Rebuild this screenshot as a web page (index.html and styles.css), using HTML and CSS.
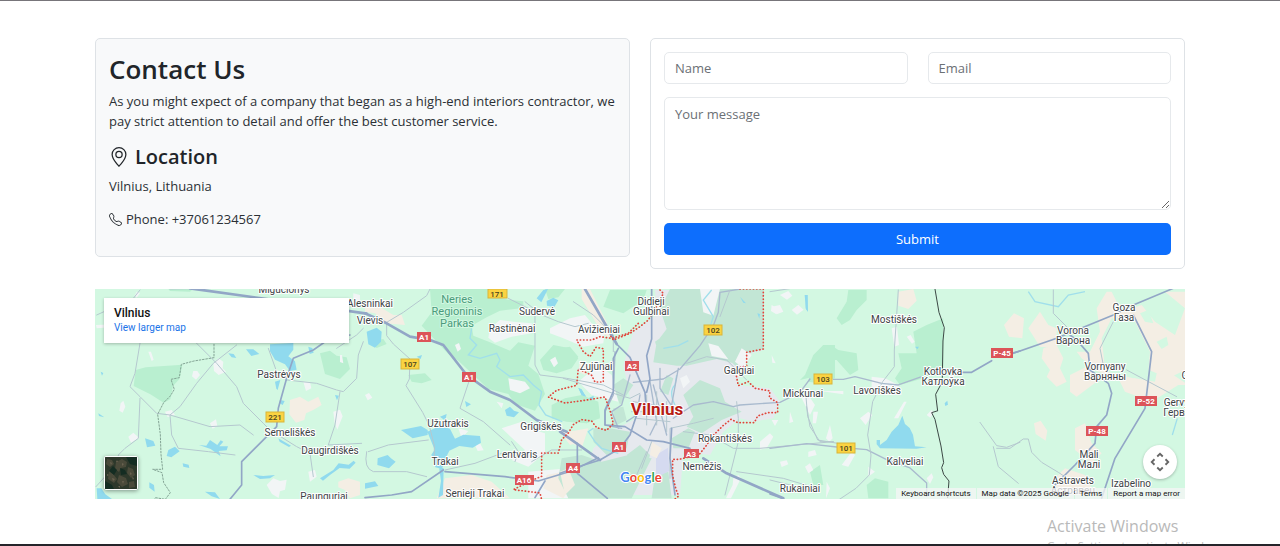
FILE: index.html
```html
<!DOCTYPE html>
<html lang="en">
<head>
<meta charset="utf-8">
<meta name="viewport" content="width=device-width, initial-scale=1">
<title>Contact Us</title>
<link rel="stylesheet" href="styles.css">
</head>
<body>
<main class="page">
  <div class="columns">
    <section class="card card-info">
      <h1 class="title">Contact Us</h1>
      <p class="text">As you might expect of a company that began as a high-end interiors contractor, we pay strict attention to detail and offer the best customer service.</p>
      <h2 class="subtitle">
        <svg class="icon-pin" viewBox="0 0 16 16" aria-hidden="true"><path d="M12.166 8.94c-.524 1.062-1.234 2.12-1.96 3.07A32 32 0 0 1 8 14.58a32 32 0 0 1-2.206-2.57c-.726-.95-1.436-2.008-1.96-3.07C3.304 7.867 3 6.862 3 6a5 5 0 0 1 10 0c0 .862-.305 1.867-.834 2.94M8 16s6-5.686 6-10A6 6 0 0 0 2 6c0 4.314 6 10 6 10"/><path d="M8 8a2 2 0 1 1 0-4 2 2 0 0 1 0 4m0 1a3 3 0 1 0 0-6 3 3 0 0 0 0 6"/></svg>
        Location
      </h2>
      <p class="text">Vilnius, Lithuania</p>
      <p class="text phone">
        <svg class="icon-phone" viewBox="0 0 16 16" aria-hidden="true"><path d="M3.654 1.328a.678.678 0 0 0-1.015-.063L1.605 2.3c-.483.484-.661 1.169-.45 1.77a17.6 17.6 0 0 0 4.168 6.608 17.6 17.6 0 0 0 6.608 4.168c.601.211 1.286.033 1.77-.45l1.034-1.034a.678.678 0 0 0-.063-1.015l-2.307-1.794a.68.68 0 0 0-.58-.122l-2.19.547a1.75 1.75 0 0 1-1.657-.459L5.482 8.062a1.75 1.75 0 0 1-.46-1.657l.548-2.19a.68.68 0 0 0-.122-.58zM1.884.511a1.745 1.745 0 0 1 2.612.163L6.29 2.98c.329.423.445.974.315 1.494l-.547 2.19a.68.68 0 0 0 .178.643l2.457 2.457a.68.68 0 0 0 .644.178l2.189-.547a1.75 1.75 0 0 1 1.494.315l2.306 1.794c.829.645.905 1.87.163 2.611l-1.034 1.034c-.74.74-1.846 1.065-2.877.702a18.6 18.6 0 0 1-7.01-4.42 18.6 18.6 0 0 1-4.42-7.009c-.362-1.03-.037-2.137.703-2.877z"/></svg>
        Phone: +37061234567
      </p>
    </section>

    <form class="card card-form">
      <div class="row">
        <input class="field" type="text" placeholder="Name" aria-label="Name">
        <input class="field" type="email" placeholder="Email" aria-label="Email">
      </div>
      <textarea class="field message" placeholder="Your message" aria-label="Your message"></textarea>
      <button class="submit" type="submit">Submit</button>
    </form>
  </div>

  <section class="map" aria-label="Map of Vilnius">
    <svg class="map-art" viewBox="0 0 1090 210" preserveAspectRatio="xMidYMid slice" role="img" aria-label="Vilnius and surroundings">
      <!-- land cover, drawn in five tiles from west to east -->
      <g transform="translate(-5 -4) scale(.3333)">
        <path class="wood" d="M137 255l30-8 110-8-8 42-20 22-8 40-20 10-40-25-50-25z M690 205l30-8 20 15 30 5 10 35-30 30-45-15z M235 12h75l-10 8-60-2z"/>
        <path class="town" d="M370 235l15-15 15 10-2 20 10 10-22 10-14-12z M310 258l12 0 8 12-12 14-12-10z M175 200l8 0 8 24-6 4z M92 355l8-8 6 18-8 18-10-6z M115 455l15-12 18 16-25 14z M225 380l20-5 10 15-22 6z M360 415l18-12 4 20-14 8z M640 290l20 0 4 20-16 8z M730 380l20-6 8 20-16 40-8-20z M655 560l20-5 5 20-20 15z M530 600l20-20 20 8 20-4-5 30-15 5-4 20-20-12z M140 20l10 4-10 14-6-6z M18 120l100-4v6l-98 8z M790 25l20 5v30l-20-5z M750 210l6 0 4 25-10-4z"/>
        <path class="sand" d="M600 345l30-10 25 15 30-15 10 25-25 15-22 10-5 20-25 8-20-25z M745 590l30-10 35 10 0 40-30 10-15-25-20-8z"/>
        <path class="water" d="M540 178l70-4 0 20-15 20 20 15 5 25-20 4-15-20-30-14-15-25z M555 290l16-5-8 30-4-4z M165 460l25 8 6 14-25 5z M360 465l22 15 10-14 8 4-12 14 26 0-4 12-24 2 6 16-30-22-35-12 22 2z M235 495l20-10 14 14-25 18-14-4z M278 535l18 4 2 10-18-4z M490 570l30 3 35-3-15 10-30 2z M345 620l30 2 15 20-25-8z M20 610l14 0 12 18 20 14h-44z M178 592l14 8 2 20-16-12z M25 385l18 12-16-4z M32 260l8 4-4 8z M570 345l14 3-6 12-10-6z M565 460l38 22-6 4-28-16z M690 580l40-25 16-20 30 4 15-12 6 6-18 18-30-2-30 22-20 16z M415 205l16 2 8 12-14-2z M655 185l12 4 4 14-12 4z M468 193l22 0 18 14-24 6z M735 330l12 2-6 14z"/>
      </g>
      <g transform="translate(270 -4) scale(.3333)">
        <path class="wood" d="M195 12h175l10 20 50 12 45 5 0 20-70 8-40 20-45 25 5 30 50 20 60 25 25-25 50 10-20 60 30 25 20 60-30 50-60-20-20-30-60-15-90-85-30-20-80-85 30-40z M525 225l40-45 50 10 25 30-20 30-45 15-40-10z M560 360l40-20 50-10 50 20 5 45-40 20-60-5-45-10z M130 270l50-5 20 20-30 10-30-5z M15 170l40-8 10 15-30 12z M540 12h60l-20 25-30 5z"/>
        <path class="town" d="M375 130l30-25 40 5 55 5 0 30-60 10-50 18-20-15z M555 130l60-30 45-10 20 25 40 20-5 40-60 10-60-25-40-15z M430 280l50 10 15 20-30 15-30-10z M410 430l60-20 20 20 50 15 0 60-50 40-50-20 40-30z M395 350l20 5-5 15z M330 480l16-4 10 20-18 2z M555 225l16-10 8 20-12 12z M270 180l12-6 6 18-10 8z M640 290l60-50 40 30 20 80-80-20z M490 560l120-10 0 90h-120z M280 430l30 8-20 22z M0 330l12-6 10 14-14 8z"/>
        <path class="sand" d="M0 50l35 10 50 30 25 0 10 30-60-5-30-30-30-5z M240 580l80-10 60 20 55 50h-220z M610 440l60-10-20 60-40-20z M545 570l50-10 20 50-20 30-60-30z"/>
        <path class="water" d="M5 140l30-12 15 12-2 30-18 18-20-10z M108 435l60-12 20 12 0 15-45 10z M187 440l30-14 10-20 8 20 20 5 15 30 25-12 50 4 3 20-25 15-40-5-30 14-12 25-10 30-20-5-12-38 10-15z M420 375l15-10 12 12 15 5-15 15-22-5z M38 520l30-10 10 10 14 10-20 20-35-10z M225 395l20-8-4 20z M0 595l30-6 10 14-40 8z M545 48l20-10 15 8-12 20-22-4z M515 40l20-25 14-3-20 40z M155 215l16-5-4 12z M300 348l18 10-14 8z M222 545l14 5-2 80-14 8 8-50z M640 308l10 5 12 22-12-4z M670 340l16-8 0 12z"/>
        <path class="river" d="M320 130l-5 30 20 20-25 30 35 10 50-15 10 20-10 20 40 30 40-5 30 30 25 20-8 40 20 30 50 20"/>
      </g>
      <g transform="translate(465 -4) scale(.3333)">
        <path class="city" d="M285 15h325l0 180-50 15-30 90 100 10 30 40-20 50-60 10-40-10-50 40-40 70-80-10-10 130h-200l-40-20-40-50 20-70 70-60 60-30-20-60-20-100 30-100 70-50z"/>
        <path class="city-wood" d="M330 12h280l0 180-50 15-30 30-60-15-90 20-30 0-70-10 10-60 30-40-20-60z M370 330l50-45 60 25 15 40 50 30-60 25-60 40-45-20 20-30z M500 180l60 15-30 50-30-25z M100 430l50 0 60 10-10 50-60 20-40-40z M335 460l50-30 20 10-20 50-45 0z M5 520l60-10 60 20 80-20 70 10-60 120h-190l-30-60z M285 570l40-10 10 80h-60z M300 320l20-50 20 10-15 50z M160 300l30-20 30 20-40 60z M200 510l40-30 30 30-10 40z M285 170l15-10 15 20-20 20z M160 370l30-5 10 40-40 20z"/>
        <path class="town" d="M420 12l60 0-20 80-30-10z M545 190l30 20-25 40-25-20z M360 280l20-10 10 20-20 20z M600 470l30-25 10 10-20 35-20 4z M520 580l15-10 8 10-30 60-15 0 20-40z M660 30l25-12 12 14-16 12z M635 60l20 12-6 16-16-10z M690 380l10 30-12 4z M635 210l12 25-10-2z M570 450l12 8-20 16z M635 405l20 0-10 18z M445 175l30 8 30 40-50-10z"/>
        <path class="airport" d="M288 510l36-22 4 70-40 20z"/>
        <path class="sand" d="M65 12l25 0 50 100 10 50-25-20-60-100z M60 225l25 15-10 30-20-10z M0 440l60 0 0 30-30 10z M275 470l30 20-15 30-20-10z M0 560l25-10 20 50-30 30z"/>
        <path class="wood" d="M745 290l10-60 35-50 35 0v100l-50 15z M0 190l30-5 25 30-30 30-25 5z M0 350l50-10 60 10 10 50-40 15-80-20z M150 15h110l-10 30-60 40-60-20z M750 560l30-20 10 60-30 0z"/>
        <path class="river" d="M455 15l-25 30 30 50-8 25M310 190l45-8 30-15M345 360q-20-40 0-60l5-30M100 430l-15 10 20 30 20 20 50 15"/>
        <path class="water" d="M734 30l8 0 2 50-6-8z M592 85l8 2-2 14z M55 310l10 5 14 20-14-6z M540 35l18 20-8-2z"/>
      </g>
      <g transform="translate(675 -4) scale(.3333)">
        <path class="wood" d="M235 15h55l0 30-30 30-20 30-25 15-15-20 30-50z M105 270l25-60 30-30 30 5 15 10 55 10 5 50-25 15-40-45-35 0-35 50-40 10z M430 140l40-20 50-20 0 160-60 20-70 20-15-20 20-30-10-45 55 0z M290 600l25-20 40 10 0 50h-60z M135 575l15 0-10 50-10-20z"/>
        <path class="town" d="M305 275l40 5 40 20 10 30-60 0-30-20z M372 400l30-50 8 0-25 50z M95 340l20-10 20 30-15 30z M180 420l8 40-10 10-10-10z M150 318h70v10z M410 155l12-5 12 20-8 6z M270 400l25-20 12 10-20 30z M215 540l30-40 10 10-20 35z M105 545l15-10 10 20-15 10z M130 380l14 0-6 35-10 0z M5 65l25-5 10 20-20 8z M65 75l20-15 16 14-20 15z M365 130l16-5 6 55-14 5z M115 500l20-5 5 15-25 6z M170 590l10 20-12 30z M30 530l20-4 5 12-20 8z M470 580l15-15 5 12-10 20z M470 390l15-15 6 8-10 15z M295 545l20 15-20 15z"/>
        <path class="sand" d="M385 20l45-8 10 35-25 25-30-10z"/>
        <path class="water" d="M320 465l10 0 0 15 20-15 15-25 20-20 12-28 8 25 14 12 10 20 6 35 35 3-30 4-110-1-10-12z M435 185h12l-5 8z M524 355l8-8 2 12-8 4z M107 30l6 0 0 50-6-10z"/>
      </g>
      <g transform="translate(875 -4) scale(.3333)">
        <path class="sand" d="M102 120l30-35 30 15-5 60-40-5z M175 130l35-50 25 40 25 10 0 60-50-5z M220 190l40-10 20 40-10 30 20 40-30 15-30-30 10-20-25-35z M320 200l40 0 30-60-10-70 30-50h15l30 60 60-20 40 50 60 40 30-80-60-50h60l50 20 0 260-60-40-40 20-70-30-10-60-50-90-40 0-30 60 10 90 90 30 60 10 10-50 90 60-30 0-80 50-80-30-20-40-60-20-50-40z M300 270l60-30 20 50-60 45-20-15z M192 415l20-8 20 30-5 30-30-20z M315 430l30-15 20 60 30 30-30 30-50-40z M245 590l40-40 60 20 30 60h-100z"/>
        <path class="green" d="M430 110l60-10 50 100-5 60-45 20-80-20z M510 85l25-10 15 40-25-5z M560 170l30-15 5 25-20 12z"/>
        <path class="river" d="M175 20l20 30 70 15 30-35 50-10M622 400l-15 50M600 350l30 10"/>
      </g>

      <!-- minor roads -->
      <g transform="translate(-5 -4) scale(.3333)" class="road">
        <path d="M150 175l-15 90-15 40 30 30 50 50 40 5 120 35 90-5 40 30"/><path d="M150 340l-5 120-40 30-20 20v20L18 605M320 175l60 60 60 70 20 50 60 60 20 20 80 50 40 20 10 70M440 180l-70 55-50 60-50 70-30 25 5 60 20 40 90 10 80 10M535 190l25 70 30 25 90 10 60 20 20 5 40-40 5-70 15-40M750 320l-15 100-20 60 100-5M240 12l220-4M20 90l110-50 20-25M740 190l60-40 20-20"/>
      </g>
      <g transform="translate(270 -4) scale(.3333)" class="road">
        <path d="M195 12l-10 20-70 50-50 30v40l20 25 50 45-2 60-10 20 50 80 20 40 15 60v60M315 280l-30 90 70 40 80 70M430 40l80 40 0 160 15 30 80 10 110 20 60 30M480 50l50 40 50 20 50 15 40-10M5 500q-10 50 20 60h100l60 15M10 500l60-20 120-15M240 555l90-20 80-30M440 470l20 30-10 30M500 530l60-35h90"/>
      </g>
      <g transform="translate(465 -4) scale(.3333)" class="road">
        <path class="thick" d="M540 12l-60 10-5 60-15 40-40 60-60 70-50 30-90 10M165 200l-5 130-25 50 0 40 50 10M240 330l-10 60-30 20M280 300l40 150M300 250l0 60 40 60M355 250l-20 110 30 30M210 270l-25 90-30 20 20 50M270 290l20 120-20 40M340 400l60-40 60-10 60 15 20-5 120-8 60-30 30-40"/><path d="M380 235l60-20 60 10 40 40 20 20M460 400l-60 15-70 15 0 150M530 350l5 50 0 70-40 160M370 440l80 10 70 40 80 0 220-20M740 365l10 60 30 45 40 0M10 280l200 60 30-15M160 200l0-50-60-60-60-40M245 550l30-80M230 570l30-70M530 560l140 20 100 30M680 620l80-10M510 15l-30 80"/><path d="M215 380h130M220 350l120 20M230 400l100 10M260 330v90M290 320v100M320 350v90"/>
      </g>
      <g transform="translate(675 -4) scale(.3333)" class="road">
        <path class="thick" d="M190 283h30l35-8 80 20 50 5 70-25M0 490l110-14 90 10 90 8 60 30 70 25 50 45 0 40"/><path d="M385 15l-12 180 0 50-35 45-30 60-15 100 10 60-5 60-40 40-60 40M108 335l5 60 30 70 60 10M0 20l130-20M0 585l80 20"/><path d="M630 412l50 70 30 5 40-15M670 485l15 60 60 50"/>
      </g>
      <g transform="translate(875 -4) scale(.3333)" class="road">
        <path d="M250 15l0 70 50 50M430 110l-40 80 10 50M470 255l150 80M80 490l40 0 40-28 15 0 10 40 30 30 50 30 30 20"/>
      </g>

      <!-- main roads -->
      <g transform="translate(-5 -4) scale(.3333)" class="highway">
        <path d="M300 10l230 32 300 44"/><path class="slim" d="M780 150l-60 10-50 35-60 25-20 60-25 90-5 55-60 60-45 45 0 70-45 55"/>
      </g>
      <g transform="translate(270 -4) scale(.3333)" class="highway">
        <path d="M0 85l65 30 70 40 60 10 40 15 70 90 70 50 60 25 80 60 90 35"/><path class="slim" d="M240 560l180 15 100 13 100-30 80-40M0 638l80-8 60-10 95-65M510 638l30-50"/>
      </g>
      <g transform="translate(465 -4) scale(.3333)" class="highway">
        <path d="M75 12l95 165"/><path class="slim" d="M170 177l40 40 45 105 5 70M275 12l0 70 0 80-15 50 10 70-10 40M175 190l-15 30 0 100-25 55 0 45 60 5 65 40 50 5 80 20M120 525l60-35 30-40 20-60M52 475l0 90 90 75M0 565l50-18 70-22M335 430l-5 90 15 110"/><path d="M0 440l120 85M430 520l70 45 170 75"/>
      </g>
      <g transform="translate(675 -4) scale(.3333)" class="highway">
        <path class="slim" d="M575 262h30l60-35M725 205l25-7M0 627l40 14"/>
      </g>
      <g transform="translate(875 -4) scale(.3333)" class="highway">
        <path class="slim" d="M130 205l130-45 170-70 60-30 120-50M300 150l20 15 35 40 5 50 55 40 10 30-15 65-30 35-5 50-60 65-60 60M490 90l55 110-20 170-90 150-40 120"/>
      </g>

      <!-- municipal, district and state borders -->
      <g class="limits">
        <path transform="translate(270 -4) scale(.3333)" d="M820 115l-30 30-50 15-35-5-25 10-45 0 20 35 20 15 18-28 22 4 0 100-25 0-10-20-40-20-5 50-60 15-25 20 50 18 60-8 60-10 15 40 10 40-20 20-30-8-15-20-30-4-25 15-15 25-20 20-10 40-50 0 0 70-25 10-60 30 80 10 10 40 5 15 50M510 640l20-18 30 18M670 640l0-12 30 0 20 14M515 430l20 20 20-5 10-15M510 450l45 5"/>
        <path transform="translate(465 -4) scale(.3333)" d="M300 15l10 10-15 30-30 50-25 20-30 20-50 20-10-15M540 12h70l0 180-50 10 0 40-35 10 10 50 30-12 20 20 45 8-2 20 25 15 0 30-30 0-30 10-10 20-50 0-20-10-25 20-30 30-20 30-20 25-60 15-20 0 0 50 10 40 8 20-30 25"/>
      </g>
      <path class="district" transform="translate(-5 -4) scale(.3333)" d="M372 178l0 40-60 10-38 10-6 40-25 5 10 30-12 20-20 20-18 35 8 60 2 60 5 45-30 0 28 10 5 30 20 30-15 20-30-5-5 10"/>
      <path class="state" transform="translate(675 -4) scale(.3333)" d="M495 12l12 70 16 46-4 40-2 110-4 20-16 30 6 50-2 0-16 5 10 20 18 80 8 50-6 15 6 20 16 20-4 50"/>

      <!-- road shields -->
      <g class="shield yellow">
        <g><rect x="393" y="0" width="19" height="9"/><text x="402" y="8">171</text></g>
        <g><rect x="306" y="70" width="18" height="10"/><text x="315" y="78">107</text></g>
        <g><rect x="171" y="123" width="18" height="10"/><text x="180" y="131">221</text></g>
        <g><rect x="609" y="36" width="18" height="10"/><text x="618" y="44">102</text></g>
        <g><rect x="719" y="85" width="18" height="10"/><text x="728" y="93">103</text></g>
        <g><rect x="742" y="154" width="18" height="10"/><text x="751" y="162">101</text></g>
      </g>
      <g class="shield red">
        <g><rect x="322" y="43" width="14" height="10"/><text x="329" y="51">A1</text></g>
        <g><rect x="367" y="83" width="14" height="10"/><text x="374" y="91">A1</text></g>
        <g><rect x="530" y="72" width="14" height="10"/><text x="537" y="80">A2</text></g>
        <g><rect x="517" y="153" width="14" height="10"/><text x="524" y="161">A1</text></g>
        <g><rect x="471" y="174" width="14" height="10"/><text x="478" y="182">A4</text></g>
        <g><rect x="420" y="186" width="19" height="10"/><text x="429" y="194">A16</text></g>
        <g><rect x="589" y="160" width="15" height="9"/><text x="596" y="168">A3</text></g>
        <g><rect x="896" y="59" width="22" height="10"/><text x="907" y="67">P-45</text></g>
        <g><rect x="1040" y="107" width="22" height="10"/><text x="1051" y="115">P-52</text></g>
        <g><rect x="991" y="137" width="22" height="10"/><text x="1002" y="145">P-48</text></g>
      </g>

      <!-- place names -->
      <g class="places">
        <text x="189" y="4">Migučionys</text>
        <text x="275" y="18">Alesninkai</text>
        <text x="275" y="35">Vievis</text>
        <text x="184" y="89">Pastrėvys</text>
        <text x="195" y="147">Semeliškės</text>
        <text x="235" y="165">Daugirdiškės</text>
        <text x="229" y="211">Paunguriai</text>
        <text x="353" y="138">Užutrakis</text>
        <text x="350" y="176">Trakai</text>
        <text x="380" y="208">Senieji Trakai</text>
        <text x="422" y="169">Lentvaris</text>
        <text x="446" y="141">Grigiškės</text>
        <text x="417" y="43">Rastinėnai</text>
        <text x="442" y="26">Sudervė</text>
        <text x="504" y="44">Avižieniai</text>
        <text x="501" y="81">Zujūnai</text>
        <text x="556" y="16">Didieji</text>
        <text x="556" y="26">Gulbinai</text>
        <text x="644" y="85">Galgiai</text>
        <text x="708" y="108">Mickūnai</text>
        <text x="630" y="153">Rokantiškės</text>
        <text x="607" y="181">Nemėžis</text>
        <text x="705" y="203">Rukainiai</text>
        <text x="799" y="34">Mostiškės</text>
        <text x="782" y="105">Lavoriškės</text>
        <text x="848" y="86">Kotlovka</text>
        <text x="848" y="96">Катлоўка</text>
        <text x="810" y="176">Kalveliai</text>
        <text x="1029" y="22">Goza</text>
        <text x="1029" y="32">Газа</text>
        <text x="978" y="45">Vorona</text>
        <text x="978" y="55">Варона</text>
        <text x="1010" y="81">Vornyany</text>
        <text x="1010" y="91">Варняны</text>
        <text x="994" y="169">Mali</text>
        <text x="994" y="179">Малі</text>
        <text x="978" y="195">Astravets</text>
        <text x="978" y="205">Астравец</text>
        <text x="1036" y="198">Izabelino</text>
        <text x="1088" y="117">Gervyaty</text>
        <text x="1088" y="127">Гервяты</text>
        <text x="1090" y="90">G</text>
      </g>
      <g class="park">
        <text x="362" y="14">Neries</text>
        <text x="362" y="26">Regioninis</text>
        <text x="362" y="38">Parkas</text>
      </g>
      <text class="capital" x="562" y="126">Vilnius</text>
      <text class="brand" x="546" y="193"><tspan fill="#4285f4">G</tspan><tspan fill="#ea4335">o</tspan><tspan fill="#fbbc05">o</tspan><tspan fill="#4285f4">g</tspan><tspan fill="#34a853">l</tspan><tspan fill="#ea4335">e</tspan></text>
    </svg>

    <div class="place-card">
      <strong class="place-name">Vilnius</strong>
      <a class="place-link" href="#">View larger map</a>
    </div>
    <button class="satellite" type="button" aria-label="Show satellite imagery">
      <svg viewBox="0 0 32 32" aria-hidden="true"><rect width="32" height="32" fill="#2d382b"/><path fill="#4a4a3a" d="M2 2l5 1 2 4-4 3-4-3z M11 5l6-3 5 3-1 5-5 1-2 4-4-3z M23 10l5 2 2 6-4 3-4-5z M4 14l4 3 4 5-3 4-6-4z M14 18l7 3 2 6-6 3-5-5z M24 25l5-1 1 6-6 1z"/><path fill="#142c22" d="M21 0h11v9l-7-2z M8 9l4 4-3 5-5-4z M0 24l7 4 2 4H0z M15 11l5 2 2 4-6 1z"/><path fill="#6a6250" d="M5 5l2 1-1 2z M17 6l2 1-2 2z M25 15l2 2-2 1z M7 21l3 1-2 2z M17 24l2 0-1 3z M12 3l1 2-2 0z M2 17l2 1-2 1z M27 20l2 1-1 2z M13 29l2 0 0 2z"/></svg>
    </button>
    <button class="camera" type="button" aria-label="Map camera controls">
      <svg viewBox="0 0 24 24" aria-hidden="true"><path d="M9 6l3-3 3 3M9 18l3 3 3-3M6 9l-3 3 3 3M18 9l3 3-3 3"/></svg>
    </button>
    <div class="attribution">
      <button class="credit" type="button">Keyboard shortcuts</button>
      <span class="credit">Map data ©2025 Google</span>
      <a class="credit" href="#">Terms</a>
      <a class="credit" href="#">Report a map error</a>
    </div>
  </section>
</main>
<aside class="watermark">
  <p class="watermark-title">Activate Windows</p>
  <p class="watermark-note">Go to Settings to activate Windows.</p>
</aside>
</body>
</html>
```
FILE: styles.css
```css
*, *::before, *::after { box-sizing: border-box; }

body {
  position: relative;
  min-height: 100vh;
  margin: 0;
  overflow: hidden;
  border-top: 1px solid #77757a;
  border-bottom: 2px solid #25252a;
  background: #fff;
  color: #2b3035;
  font: 13px/20px "Segoe UI", "Open Sans", "Noto Sans", sans-serif;
}

.page {
  max-width: 1090px;
  margin: 0 auto;
  padding: 37px 0 44px;
}

.columns {
  display: grid;
  grid-template-columns: 1fr 1fr;
  align-items: start;
  gap: 20px;
  margin-bottom: 20px;
}

.card {
  border: 1px solid #dee2e6;
  border-radius: 5px;
  padding: 13px;
}

.card-info { background: #f8f9fa; }

.title, .subtitle { color: #212529; font-weight: 600; }
.title { margin: 0 0 5px; font-size: 26px; line-height: 34px; }
.subtitle {
  display: flex;
  align-items: center;
  gap: 6px;
  margin: 0 0 6px;
  font-size: 20px;
  line-height: 26px;
}

.text { margin: 0 0 13px; }
.phone {
  display: flex;
  align-items: center;
  gap: 4px;
  margin-bottom: 14px;
}

.icon-pin { width: 20px; height: 20px; fill: currentColor; }
.icon-phone { width: 13px; height: 13px; fill: currentColor; }

.card-form { display: grid; gap: 13px; }
.row {
  display: grid;
  grid-template-columns: 1fr 1fr;
  gap: 20px;
}

.field {
  width: 100%;
  min-width: 0;
  padding: 5px 10px;
  border: 1px solid #e6e9ec;
  border-radius: 5px;
  background: #fff;
  color: inherit;
  font: inherit;
}
.field::placeholder { color: #6b7075; opacity: 1; }

.message {
  display: block;
  height: 113px;
  padding-top: 6px;
  resize: vertical;
}

.submit {
  padding: 6px 10px;
  border: 0;
  border-radius: 5px;
  background: #0d6efd;
  color: #fff;
  font: inherit;
}

.map {
  position: relative;
  overflow: hidden;
  background: #d3f8e2;
  font-family: Roboto, sans-serif;
}
.map-art { display: block; width: 100%; min-height: 210px; }

.wood { fill: #b9efd0; }
.green { fill: #d3f8e2; }
.city { fill: #e6e9ee; }
.city-wood { fill: #c2e6d5; }
.town { fill: #f2f5f6; }
.sand { fill: #f4eee4; }
.airport { fill: #d5daf0; }
.water { fill: #90daee; }
.river { fill: none; stroke: #a0dfeb; stroke-width: 4; }

.road, .highway, .limits, .district, .state {
  fill: none;
  stroke-linejoin: round;
  stroke-linecap: round;
}
.road { stroke: #b5c8cf; stroke-width: 3; }
.road .thick { stroke: #a9bace; stroke-width: 4; }
.highway { stroke: #92a6c6; stroke-width: 8; }
.highway .slim { stroke-width: 5; }
.limits { stroke: #e0443a; stroke-width: 5; stroke-dasharray: 1 9; }
.district { stroke: #83a394; stroke-width: 3; stroke-dasharray: 5 5; }
.state { stroke: #3b4744; stroke-width: 3; }

.shield { font-size: 8px; text-anchor: middle; }
.yellow rect { fill: #fbd341; stroke: #d9b53a; }
.yellow text { fill: #4a431f; font-weight: 500; }
.red rect { fill: #dc5459; }
.red text { fill: #fff; font-weight: 700; }

.places, .park, .capital, .brand {
  paint-order: stroke;
  stroke: #fff;
  stroke-width: 2px;
  stroke-linejoin: round;
}
.places { fill: #3c4245; font-size: 10px; text-anchor: middle; }
.park { fill: #4b9b7c; font-size: 11px; text-anchor: middle; stroke: #d3f8e2; }
.capital { fill: #b71c15; font-size: 17px; font-weight: 700; text-anchor: middle; }
.brand { font-family: Lato, sans-serif; font-size: 13px; font-weight: 700; text-anchor: middle; }

.place-card {
  position: absolute;
  top: 9px;
  left: 9px;
  display: grid;
  width: 245px;
  padding: 8px 10px;
  background: #fff;
  box-shadow: 0 1px 3px rgba(0, 0, 0, .25);
}
.place-name { color: #111; font-size: 12px; font-weight: 500; line-height: 15px; }
.place-link {
  color: #1a73e8;
  font-size: 10px;
  line-height: 14px;
  text-decoration: none;
}

.satellite {
  position: absolute;
  bottom: 9px;
  left: 9px;
  width: 34px;
  height: 34px;
  padding: 0;
  overflow: hidden;
  border: 1px solid #fff;
  border-radius: 2px;
  background: #2d382b;
  box-shadow: 0 1px 4px rgba(0, 0, 0, .4);
}
.satellite svg { display: block; width: 100%; height: 100%; }

.camera {
  position: absolute;
  right: 8px;
  bottom: 20px;
  display: grid;
  place-items: center;
  width: 34px;
  height: 34px;
  padding: 0;
  border: 0;
  border-radius: 50%;
  background: #fff;
  box-shadow: 0 1px 3px rgba(0, 0, 0, .25);
}
.camera svg {
  width: 22px;
  height: 22px;
  fill: none;
  stroke: #666;
  stroke-width: 2;
}

.attribution {
  position: absolute;
  right: 0;
  bottom: 0;
  display: flex;
  gap: 1px;
}
.credit {
  padding: 0 5px;
  border: 0;
  background: rgba(245, 245, 245, .75);
  color: #111;
  font: 8px/11px Roboto, sans-serif;
  text-decoration: none;
}

.watermark {
  position: absolute;
  right: 0;
  bottom: 0;
  width: 233px;
  height: 30px;
  overflow: hidden;
  color: #b9b9b9;
  pointer-events: none;
}
.watermark p { margin: 0; white-space: nowrap; }
.watermark-title { font-size: 16px; line-height: 24px; }
.watermark-note { font-size: 11px; line-height: 16px; }
```
